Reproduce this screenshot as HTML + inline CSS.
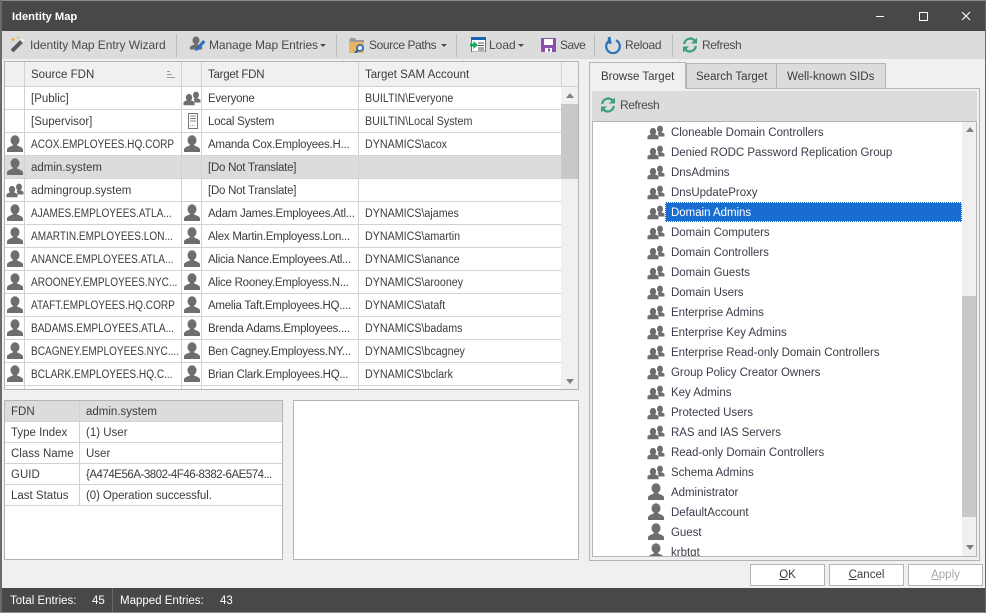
<!DOCTYPE html>
<html><head><meta charset="utf-8"><title>Identity Map</title>
<style>
*{box-sizing:border-box}
html,body{margin:0;padding:0;width:986px;height:613px;overflow:hidden;background:#f0f0f0}
body{position:relative;font-family:"Liberation Sans",sans-serif;font-size:11.5px;color:#3c3c3c}
div,span.t,svg.i{position:absolute}
.t{white-space:nowrap;line-height:14px}
.r{left:5px;width:556px;height:1px;background:#d2d2d2}
.v{width:1px;background:#d2d2d2}
.sep{top:34px;width:1px;height:23px;background:#bdbdbd}
.tb{top:38px;color:#4a4a4a;font-size:12px}
.car{width:0;height:0;border-left:3px solid transparent;border-right:3px solid transparent;border-top:3px solid #4a4a4a;top:44px}
.tab{top:63px;height:25px;background:#dcdcdc;border:1px solid #b4b4b4;border-bottom:none}
.btn{top:564px;width:75px;height:22px;background:#fff;border:1px solid #b4b4b4;text-align:center;line-height:21px;font-size:11.5px;color:#3c3c3c}
u{text-decoration:underline}
.tr{left:671px;color:#3c3c4a;letter-spacing:-.03px}
.g1{left:31px}.g2{left:208px;letter-spacing:-.25px}.g3{left:365px;transform:scaleX(.93);transform-origin:0 0}
.c{transform:scaleX(.875);transform-origin:0 0}
</style></head><body>
<svg width="0" height="0" style="position:absolute"><defs>
<symbol id="u" viewBox="0 0 18 18"><ellipse cx="9" cy="6.300" rx="4.500" ry="5" fill="#6e6e6e"/><path fill="#6e6e6e" d="M1 18v-2.400c0-2.200 3.500-3 6-4.200l.2-1.900h3.600l.2 1.900c2.500 1.200 6 2 6 4.200V18z"/></symbol>
<symbol id="g" viewBox="0 0 18 15"><ellipse cx="13" cy="4" rx="3" ry="3.400" fill="#6e6e6e"/><path fill="#6e6e6e" d="M11 11.500h6.500V9.400c0-1.200-2-1.700-3.300-2.300h-2.400c-.5.300-1 .5-1.500.7 1 1 1.600 2.300.7 3.700z"/><ellipse cx="6" cy="6.500" rx="3.200" ry="3.600" fill="#6e6e6e"/><path fill="#6e6e6e" d="M.5 14.200v-2.400c0-1.300 2-2 3.500-2.600h4c1.500.6 3.500 1.300 3.500 2.600v2.400z"/></symbol>
<symbol id="rf" viewBox="0 0 16 16"><g fill="none" stroke="#3aa076" stroke-width="2.200"><path d="M2.200 7A6 6 0 0 1 12.500 3.400"/><path d="M13.800 9A6 6 0 0 1 3.500 12.600"/></g><path fill="#3aa076" d="M15 .5v6H9zM1 15.500v-6h6z"/></symbol>
</defs></svg>

<!-- window frame -->
<div style="left:0;top:0;width:986px;height:31px;background:#484848"></div>
<div style="left:0;top:0;width:986px;height:1px;background:#8a8a8a"></div>
<span class="t" style="left:12px;top:10px;color:#fff;font-weight:bold;font-size:11.200px">Identity Map</span>
<div style="left:876px;top:16px;width:8px;height:1px;background:#fff"></div>
<div style="left:919px;top:12px;width:9px;height:9px;border:1px solid #fff"></div>
<svg class="i" style="left:961px;top:11px" width="10" height="10"><path d="M1 1l8 8M9 1l-8 8" stroke="#fff" stroke-width="1.100"/></svg>

<!-- toolbar -->
<div style="left:1px;top:31px;width:984px;height:28px;background:#dcdcdc"></div>
<svg class="i" style="left:9px;top:35px" width="18" height="18"><path d="M3 16L15 4" stroke="#5a5a5a" stroke-width="4"/><path d="M12.500 6.500L15 4" stroke="#f0f0f0" stroke-width="4"/><path d="M4 2l.8 1.700L6.500 4.500l-1.700.8L4 7l-.8-1.700L1.500 4.500l1.700-.8z" fill="#eeaa44"/><circle cx="9" cy="2.500" r="1" fill="#eeaa44"/></svg>
<span class="t tb" style="left:30px;letter-spacing:-.07px">Identity Map Entry Wizard</span>
<div class="sep" style="left:176px"></div>
<svg class="i" style="left:189px;top:36px" width="18" height="18" viewBox="0 0 18 18"><use href="#u" x="0" y="-1" width="14" height="15"/><path d="M6 15l1-3 7-8 2.500 2-7 8z" fill="#2f6fc0"/></svg>
<span class="t tb" style="left:209px;letter-spacing:-.1px">Manage Map Entries</span><div class="car" style="left:320px"></div>
<div class="sep" style="left:336px"></div>
<svg class="i" style="left:349px;top:37px" width="17" height="16"><path d="M0 2h5l1 2h9v12H0z" fill="#e8b565"/><path d="M1 1h5l1 2h8v2H1z" fill="#9a9a9a"/><circle cx="11" cy="11" r="3" fill="#fff" stroke="#1c62b0" stroke-width="1.600"/><path d="M9 13l-3 3" stroke="#1c62b0" stroke-width="2"/></svg>
<span class="t tb" style="left:369px;letter-spacing:-.4px">Source Paths</span><div class="car" style="left:441px"></div>
<div class="sep" style="left:456px"></div>
<svg class="i" style="left:470px;top:37px" width="16" height="15"><rect x="1.500" y="1" width="14" height="14" fill="#fff" stroke="#555" stroke-width=".8"/><rect x="1" y="0" width="15" height="3" fill="#1c62b0"/><path d="M8 6h6M8 8.500h6M8 11h6M8 13h6" stroke="#555"/><path d="M0 6.500h3.500V4L8 8l-4.500 4V9.500H0z" fill="#18a860"/></svg>
<span class="t tb" style="left:489px">Load</span><div class="car" style="left:518px"></div>
<svg class="i" style="left:541px;top:38px" width="15" height="14"><rect width="15" height="14" rx="1" fill="#8a4fa8"/><rect x="3" y="1" width="9" height="6" fill="#fff"/><rect x="4" y="10" width="7" height="4" fill="#fff"/><rect x="7" y="10.500" width="2" height="3" fill="#8a4fa8"/></svg>
<span class="t tb" style="left:560px;letter-spacing:-.5px">Save</span>
<div class="sep" style="left:594px"></div>
<svg class="i" style="left:604px;top:36px" width="18" height="18"><path d="M6 4.200A6.800 6.800 0 1 0 12 4.200" fill="none" stroke="#2f72b8" stroke-width="2.200"/><path d="M4 1v7h3V1z" fill="#2f72b8" transform="rotate(-10 5 4)"/></svg>
<span class="t tb" style="left:625px;letter-spacing:-.3px">Reload</span>
<div class="sep" style="left:672px"></div>
<svg class="i" style="left:682px;top:37px" width="16" height="16"><use href="#rf"/></svg>
<span class="t tb" style="left:702px;letter-spacing:-.4px">Refresh</span>

<!-- left grid -->
<div style="left:4px;top:61px;width:575px;height:329px;background:#fff;border:1px solid #b4b4b4"></div>
<div style="left:5px;top:62px;width:573px;height:24px;background:#f0f0f0"></div>
<div style="left:5px;top:156px;width:556px;height:23px;background:#dcdcdc"></div>
<div class="v" style="left:24px;top:62px;height:327px"></div>
<div class="v" style="left:181px;top:62px;height:327px"></div>
<div class="v" style="left:201px;top:62px;height:327px"></div>
<div class="v" style="left:358px;top:62px;height:327px"></div>
<div class="v" style="left:561px;top:62px;height:25px"></div>
<div class="r" style="top:86px;width:573px"></div>
<div class="r" style="top:109px"></div><div class="r" style="top:132px"></div><div class="r" style="top:155px"></div><div class="r" style="top:178px"></div><div class="r" style="top:201px"></div><div class="r" style="top:224px"></div><div class="r" style="top:247px"></div><div class="r" style="top:270px"></div><div class="r" style="top:293px"></div><div class="r" style="top:316px"></div><div class="r" style="top:339px"></div><div class="r" style="top:362px"></div><div class="r" style="top:385px"></div>
<span class="t g1" style="top:68px">Source FDN</span>
<span class="t g2" style="top:68px">Target FDN</span>
<span class="t" style="left:365px;top:68px">Target SAM Account</span>
<svg class="i" style="left:167px;top:71px" width="9" height="8"><path d="M0 .5h3M0 3.500h5M0 6.500h8" stroke="#9a9a9a"/></svg>
<!-- scrollbar -->
<div style="left:561px;top:87px;width:17px;height:302px;background:#f0f0f0"></div>
<div style="left:561px;top:104px;width:17px;height:75px;background:#c8c8c8"></div>
<svg class="i" style="left:566px;top:93px" width="8" height="5"><path d="M4 0L8 5H0z" fill="#808080"/></svg>
<svg class="i" style="left:566px;top:379px" width="8" height="5"><path d="M4 5L8 0H0z" fill="#808080"/></svg>

<span class="t g1" style="top:92px">[Public]</span><svg class="i" style="left:183px;top:91px" width="18" height="15"><use href="#g"/></svg><span class="t g2" style="top:92px">Everyone</span><span class="t g3" style="top:92px">BUILTIN\Everyone</span>
<span class="t g1" style="top:115px">[Supervisor]</span>
<svg class="i" style="left:188px;top:113px" width="10" height="17"><rect x=".5" y=".5" width="9" height="15" fill="#fff" stroke="#777"/><path d="M2 3h6M2 5.500h6M2 8h6" stroke="#888"/><path d="M5 5.500h3" stroke="#c85050"/><path d="M2 12.500h6" stroke="#999" stroke-dasharray="1 1"/></svg>
<span class="t g2" style="top:115px">Local System</span><span class="t g3" style="top:115px">BUILTIN\Local System</span>

<svg class="i" style="left:6px;top:134px" width="18" height="18"><use href="#u"/></svg><span class="t g1 c" style="top:138px">ACOX.EMPLOYEES.HQ.CORP</span><svg class="i" style="left:183px;top:134px" width="18" height="18"><use href="#u"/></svg><span class="t g2" style="top:138px">Amanda Cox.Employees.H...</span><span class="t g3" style="top:138px">DYNAMICS\acox</span>
<svg class="i" style="left:6px;top:157px" width="18" height="18"><use href="#u"/></svg><span class="t g1" style="top:161px">admin.system</span><span class="t g2" style="top:161px">[Do Not Translate]</span>
<svg class="i" style="left:6px;top:183px" width="18" height="15"><use href="#g"/></svg><span class="t g1" style="top:184px">admingroup.system</span><span class="t g2" style="top:184px">[Do Not Translate]</span>
<svg class="i" style="left:6px;top:203px" width="18" height="18"><use href="#u"/></svg><span class="t g1 c" style="top:207px">AJAMES.EMPLOYEES.ATLA...</span><svg class="i" style="left:183px;top:203px" width="18" height="18"><use href="#u"/></svg><span class="t g2" style="top:207px">Adam James.Employees.Atl...</span><span class="t g3" style="top:207px">DYNAMICS\ajames</span>
<svg class="i" style="left:6px;top:226px" width="18" height="18"><use href="#u"/></svg><span class="t g1 c" style="top:230px">AMARTIN.EMPLOYEES.LON...</span><svg class="i" style="left:183px;top:226px" width="18" height="18"><use href="#u"/></svg><span class="t g2" style="top:230px">Alex Martin.Employess.Lon...</span><span class="t g3" style="top:230px">DYNAMICS\amartin</span>
<svg class="i" style="left:6px;top:249px" width="18" height="18"><use href="#u"/></svg><span class="t g1 c" style="top:253px">ANANCE.EMPLOYEES.ATLA...</span><svg class="i" style="left:183px;top:249px" width="18" height="18"><use href="#u"/></svg><span class="t g2" style="top:253px">Alicia Nance.Employees.Atl...</span><span class="t g3" style="top:253px">DYNAMICS\anance</span>
<svg class="i" style="left:6px;top:272px" width="18" height="18"><use href="#u"/></svg><span class="t g1 c" style="top:276px">AROONEY.EMPLOYEES.NYC...</span><svg class="i" style="left:183px;top:272px" width="18" height="18"><use href="#u"/></svg><span class="t g2" style="top:276px">Alice Rooney.Employess.N...</span><span class="t g3" style="top:276px">DYNAMICS\arooney</span>
<svg class="i" style="left:6px;top:295px" width="18" height="18"><use href="#u"/></svg><span class="t g1 c" style="top:299px">ATAFT.EMPLOYEES.HQ.CORP</span><svg class="i" style="left:183px;top:295px" width="18" height="18"><use href="#u"/></svg><span class="t g2" style="top:299px">Amelia Taft.Employees.HQ....</span><span class="t g3" style="top:299px">DYNAMICS\ataft</span>
<svg class="i" style="left:6px;top:318px" width="18" height="18"><use href="#u"/></svg><span class="t g1 c" style="top:322px">BADAMS.EMPLOYEES.ATLA...</span><svg class="i" style="left:183px;top:318px" width="18" height="18"><use href="#u"/></svg><span class="t g2" style="top:322px">Brenda Adams.Employees....</span><span class="t g3" style="top:322px">DYNAMICS\badams</span>
<svg class="i" style="left:6px;top:341px" width="18" height="18"><use href="#u"/></svg><span class="t g1 c" style="top:345px">BCAGNEY.EMPLOYEES.NYC....</span><svg class="i" style="left:183px;top:341px" width="18" height="18"><use href="#u"/></svg><span class="t g2" style="top:345px">Ben Cagney.Employess.NY...</span><span class="t g3" style="top:345px">DYNAMICS\bcagney</span>
<svg class="i" style="left:6px;top:364px" width="18" height="18"><use href="#u"/></svg><span class="t g1 c" style="top:368px">BCLARK.EMPLOYEES.HQ.C...</span><svg class="i" style="left:183px;top:364px" width="18" height="18"><use href="#u"/></svg><span class="t g2" style="top:368px">Brian Clark.Employees.HQ...</span><span class="t g3" style="top:368px">DYNAMICS\bclark</span>

<!-- details -->
<div style="left:4px;top:400px;width:279px;height:160px;background:#fff;border:1px solid #b4b4b4"></div>
<div style="left:5px;top:401px;width:277px;height:20px;background:#dcdcdc"></div>
<div class="v" style="left:79px;top:401px;height:104px"></div>
<div class="r" style="top:421px;width:277px"></div><div class="r" style="top:442px;width:277px"></div><div class="r" style="top:463px;width:277px"></div><div class="r" style="top:484px;width:277px"></div><div class="r" style="top:505px;width:277px"></div>
<span class="t" style="left:11px;top:405px">FDN</span><span class="t" style="left:86px;top:405px">admin.system</span>
<span class="t" style="left:11px;top:426px">Type Index</span><span class="t" style="left:86px;top:426px">(1) User</span>
<span class="t" style="left:11px;top:447px">Class Name</span><span class="t" style="left:86px;top:447px">User</span>
<span class="t" style="left:11px;top:468px">GUID</span><span class="t" style="left:86px;top:468px;letter-spacing:-.48px">{A474E56A-3802-4F46-8382-6AE574...</span>
<span class="t" style="left:11px;top:489px">Last Status</span><span class="t" style="left:86px;top:489px;letter-spacing:-.08px">(0) Operation successful.</span>
<div style="left:293px;top:400px;width:286px;height:160px;background:#fff;border:1px solid #b4b4b4"></div>

<!-- right panel -->
<div style="left:589px;top:88px;width:391px;height:473px;background:#f0f0f0;border:1px solid #b4b4b4"></div>
<div class="tab" style="left:686px;width:91px"></div>
<div class="tab" style="left:776px;width:110px"></div>
<div class="tab" style="left:589px;top:62px;width:97px;height:27px;background:#f0f0f0"></div>
<span class="t" style="left:601px;top:70px">Browse Target</span>
<span class="t" style="left:696px;top:70px">Search Target</span>
<span class="t" style="left:787px;top:70px">Well-known SIDs</span>
<div style="left:592px;top:91px;width:385px;height:30px;background:#dcdcdc"></div>
<svg class="i" style="left:600px;top:97px" width="16" height="16"><use href="#rf"/></svg>
<span class="t" style="left:620px;top:98px;font-size:12px;color:#4a4a4a;letter-spacing:-.4px">Refresh</span>
<div style="left:592px;top:121px;width:385px;height:436px;background:#fff;border:1px solid #b4b4b4;overflow:hidden"></div>
<div style="left:962px;top:122px;width:14px;height:434px;background:#f0f0f0"></div>
<div style="left:962px;top:296px;width:14px;height:221px;background:#c8c8c8"></div>
<svg class="i" style="left:966px;top:127px" width="8" height="5"><path d="M4 0L8 5H0z" fill="#808080"/></svg>
<svg class="i" style="left:966px;top:545px" width="8" height="5"><path d="M4 5L8 0H0z" fill="#808080"/></svg>

<div style="left:665px;top:202px;width:297px;height:20px;background:#196cd0;border:1px dotted #fff"></div>

<svg class="i" style="left:647px;top:125px" width="18" height="15"><use href="#g"/></svg><span class="t tr" style="top:126px">Cloneable Domain Controllers</span>
<svg class="i" style="left:647px;top:145px" width="18" height="15"><use href="#g"/></svg><span class="t tr" style="top:146px">Denied RODC Password Replication Group</span>
<svg class="i" style="left:647px;top:165px" width="18" height="15"><use href="#g"/></svg><span class="t tr" style="top:166px">DnsAdmins</span>
<svg class="i" style="left:647px;top:185px" width="18" height="15"><use href="#g"/></svg><span class="t tr" style="top:186px">DnsUpdateProxy</span>
<svg class="i" style="left:647px;top:205px" width="18" height="15"><use href="#g"/></svg><span class="t tr" style="top:206px;color:#fff">Domain Admins</span>
<svg class="i" style="left:647px;top:225px" width="18" height="15"><use href="#g"/></svg><span class="t tr" style="top:226px">Domain Computers</span>
<svg class="i" style="left:647px;top:245px" width="18" height="15"><use href="#g"/></svg><span class="t tr" style="top:246px">Domain Controllers</span>
<svg class="i" style="left:647px;top:265px" width="18" height="15"><use href="#g"/></svg><span class="t tr" style="top:266px">Domain Guests</span>
<svg class="i" style="left:647px;top:285px" width="18" height="15"><use href="#g"/></svg><span class="t tr" style="top:286px">Domain Users</span>
<svg class="i" style="left:647px;top:305px" width="18" height="15"><use href="#g"/></svg><span class="t tr" style="top:306px">Enterprise Admins</span>
<svg class="i" style="left:647px;top:325px" width="18" height="15"><use href="#g"/></svg><span class="t tr" style="top:326px">Enterprise Key Admins</span>
<svg class="i" style="left:647px;top:345px" width="18" height="15"><use href="#g"/></svg><span class="t tr" style="top:346px">Enterprise Read-only Domain Controllers</span>
<svg class="i" style="left:647px;top:365px" width="18" height="15"><use href="#g"/></svg><span class="t tr" style="top:366px">Group Policy Creator Owners</span>
<svg class="i" style="left:647px;top:385px" width="18" height="15"><use href="#g"/></svg><span class="t tr" style="top:386px">Key Admins</span>
<svg class="i" style="left:647px;top:405px" width="18" height="15"><use href="#g"/></svg><span class="t tr" style="top:406px">Protected Users</span>
<svg class="i" style="left:647px;top:425px" width="18" height="15"><use href="#g"/></svg><span class="t tr" style="top:426px">RAS and IAS Servers</span>
<svg class="i" style="left:647px;top:445px" width="18" height="15"><use href="#g"/></svg><span class="t tr" style="top:446px">Read-only Domain Controllers</span>
<svg class="i" style="left:647px;top:465px" width="18" height="15"><use href="#g"/></svg><span class="t tr" style="top:466px">Schema Admins</span>
<svg class="i" style="left:647px;top:482px" width="18" height="18"><use href="#u"/></svg><span class="t tr" style="top:486px">Administrator</span>
<svg class="i" style="left:647px;top:502px" width="18" height="18"><use href="#u"/></svg><span class="t tr" style="top:506px">DefaultAccount</span>
<svg class="i" style="left:647px;top:522px" width="18" height="18"><use href="#u"/></svg><span class="t tr" style="top:526px">Guest</span>
<div style="left:640px;top:542px;width:100px;height:14px;overflow:hidden"><svg style="position:absolute;left:7px;top:0" width="18" height="18"><use href="#u"/></svg><span class="t" style="left:31px;top:4px;color:#3c3c4a">krbtgt</span></div>

<!-- buttons -->
<div class="btn" style="left:750px"><u>O</u>K</div>
<div class="btn" style="left:829px"><u>C</u>ancel</div>
<div class="btn" style="left:908px;color:#a8a8a8"><u>A</u>pply</div>

<!-- status -->
<div style="left:1px;top:588px;width:984px;height:24px;background:#484848"></div>
<div style="left:112px;top:588px;width:1px;height:24px;background:#6a6a6a"></div>
<span class="t" style="left:10px;top:594px;color:#fff">Total Entries:</span>
<span class="t" style="left:92px;top:594px;color:#fff">45</span>
<span class="t" style="left:120px;top:594px;color:#fff">Mapped Entries:</span>
<span class="t" style="left:220px;top:594px;color:#fff">43</span>
<div style="left:0;top:0;width:2px;height:613px;background:#6a6a6a"></div>
<div style="left:985px;top:0;width:1px;height:613px;background:#6a6a6a"></div>
<div style="left:0;top:612px;width:986px;height:1px;background:#8a8a8a"></div>
</body></html>
